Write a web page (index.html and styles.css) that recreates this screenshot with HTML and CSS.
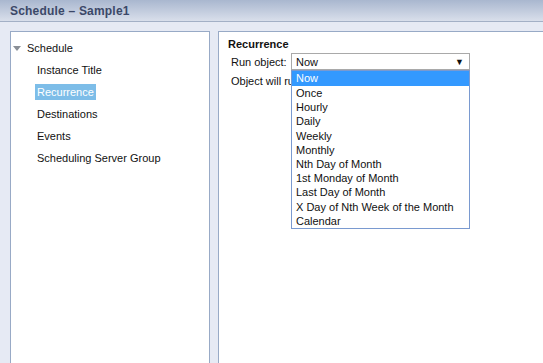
FILE: index.html
```html
<!DOCTYPE html>
<html lang="en">
<head>
  <meta charset="UTF-8">
  <title>Schedule - Sample1</title>
  <link rel="stylesheet" href="styles.css">
</head>
<body>
  <header class="title-bar">
    <h1>Schedule &ndash; Sample1</h1>
  </header>

  <div class="container">
    <!-- Tree navigation -->
    <div class="tree-panel">
      <div class="tree-root">
        <span class="tree-arrow"></span>
        <span>Schedule</span>
      </div>
      <ul class="tree-items">
        <li>Instance Title</li>
        <li><span class="selected">Recurrence</span></li>
        <li>Destinations</li>
        <li>Events</li>
        <li>Scheduling Server Group</li>
      </ul>
    </div>

    <!-- Recurrence settings -->
    <div class="content-panel">
      <h2>Recurrence</h2>
      <div class="field-row">
        <label>Run object:</label>
        <div class="combo">
          <div class="combo-box">
            <span>Now</span>
            <span class="combo-arrow">&#9660;</span>
          </div>
          <ul class="combo-list">
            <li class="active">Now</li>
            <li>Once</li>
            <li>Hourly</li>
            <li>Daily</li>
            <li>Weekly</li>
            <li>Monthly</li>
            <li>Nth Day of Month</li>
            <li>1st Monday of Month</li>
            <li>Last Day of Month</li>
            <li>X Day of Nth Week of the Month</li>
            <li>Calendar</li>
          </ul>
        </div>
      </div>
      <p class="note">Object will run right now.</p>
    </div>
  </div>
</body>
</html>
```

FILE: styles.css
```css
* {
  margin: 0;
  padding: 0;
  box-sizing: border-box;
}

body {
  font-family: "Liberation Sans", Tahoma, sans-serif;
  font-size: 11px;
  color: #111;
  background-color: #e6eaf4;
  height: 363px;
  overflow: hidden;
  white-space: nowrap;
}

/* Title bar */
.title-bar {
  height: 22px;
  padding: 4px 10px 0;
  background: linear-gradient(to bottom, #a9b7cf, #d9dfeb);
  border-bottom: 1px solid #a3b0c6;
}

.title-bar h1 {
  font-size: 12px;
  font-weight: bold;
  color: #3b4868;
  letter-spacing: 0.2px;
}

/* Layout */
.container {
  display: flex;
  gap: 8px;
  padding: 9px 0 0 10px;
  height: 341px;
}

.tree-panel {
  width: 200px;
  background: white;
  border: 1px solid #98aac6;
  border-bottom: none;
  padding: 9px 0 0 0;
}

.content-panel {
  flex: 1;
  background: white;
  border: 1px solid #98aac6;
  border-right: none;
  border-bottom: none;
  padding: 6px 9px;
  position: relative;
}

/* Tree */
.tree-root {
  display: flex;
  align-items: center;
  height: 14px;
}

.tree-arrow {
  width: 0;
  height: 0;
  margin: 0 6px 0 2px;
  border-left: 4px solid transparent;
  border-right: 4px solid transparent;
  border-top: 5px solid #8a8f96;
}

.tree-items {
  list-style: none;
  padding-left: 26px;
  margin-top: 8px;
}

.tree-items li {
  height: 22px;
  line-height: 14px;
}

.tree-items .selected {
  display: inline-block;
  background: #7dbde8;
  color: white;
  padding: 1px 2px;
  margin: -1px 0 0 -2px;
}

/* Content */
.content-panel h2 {
  font-size: 11px;
  font-weight: bold;
  margin-bottom: 3px;
}

.field-row {
  display: flex;
  align-items: center;
  padding-left: 3px;
}

.field-row label {
  width: 60px;
}

.combo {
  position: relative;
  width: 179px;
}

.combo-box {
  display: flex;
  justify-content: space-between;
  align-items: center;
  height: 17px;
  padding: 0 5px 0 4px;
  border: 1px solid #a9a9a9;
  background: white;
}

.combo-arrow {
  font-size: 9px;
}

.combo-list {
  position: absolute;
  top: 17px;
  left: 0;
  width: 179px;
  list-style: none;
  background: white;
  border: 1px solid #7a9ad0;
  z-index: 10;
}

.combo-list li {
  height: 14.2px;
  line-height: 14px;
  padding-left: 4px;
}

.combo-list li.active {
  background: #3399ff;
  color: white;
  height: 15px;
  line-height: 15px;
}

.note {
  margin-top: 5px;
  padding-left: 3px;
}
```
